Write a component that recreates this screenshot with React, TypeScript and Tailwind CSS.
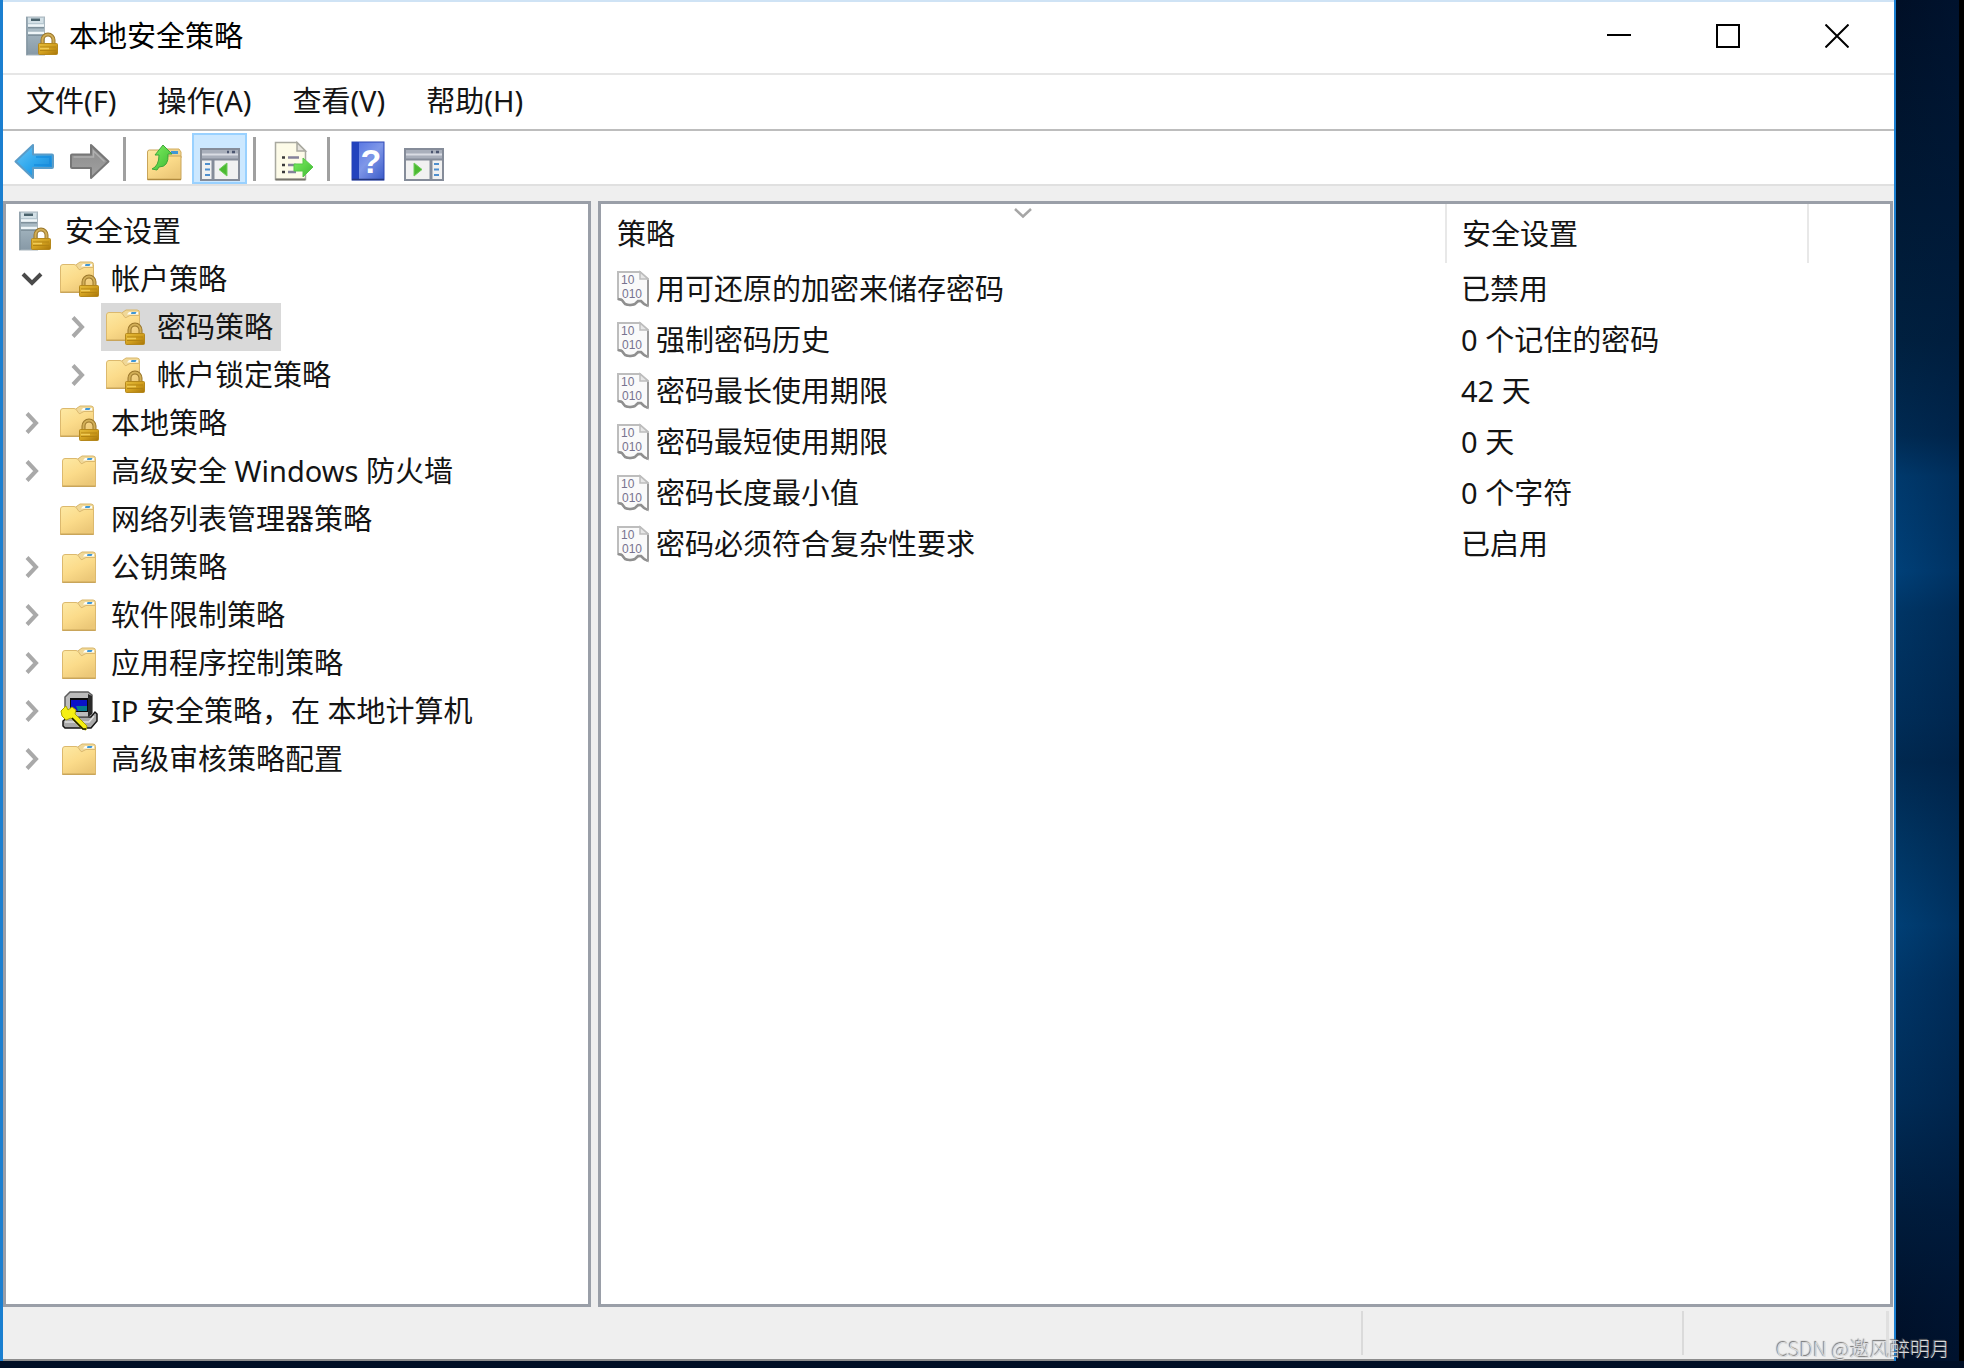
import type { ReactNode } from "react";

/* ---------- icons ---------- */

function Gradients() {
  return (
    <svg width="0" height="0" className="absolute" aria-hidden="true">
      <defs>
        <linearGradient id="gold" x1="0" y1="0" x2="1" y2="1">
          <stop offset="0" stopColor="#e6bd3c" />
          <stop offset="0.5" stopColor="#d2a01f" />
          <stop offset="1" stopColor="#a87508" />
        </linearGradient>
        <linearGradient id="server" x1="0" y1="0" x2="0" y2="1">
          <stop offset="0" stopColor="#c3d3db" />
          <stop offset="0.5" stopColor="#9dafba" />
          <stop offset="1" stopColor="#8799a6" />
        </linearGradient>
        <linearGradient id="paperYellow" x1="0" y1="0" x2="0.6" y2="1">
          <stop offset="0" stopColor="#fde9a4" />
          <stop offset="0.55" stopColor="#fbdb8a" />
          <stop offset="1" stopColor="#ecc878" />
        </linearGradient>
        <linearGradient id="blueArrow" x1="0" y1="0" x2="1" y2="1">
          <stop offset="0" stopColor="#6cc6f5" />
          <stop offset="0.5" stopColor="#2fa8ee" />
          <stop offset="1" stopColor="#1780cf" />
        </linearGradient>
        <linearGradient id="greyArrow" x1="0" y1="0" x2="0" y2="1">
          <stop offset="0" stopColor="#8a8a8a" />
          <stop offset="1" stopColor="#a2a2a2" />
        </linearGradient>
        <linearGradient id="help" x1="0" y1="0" x2="1" y2="1">
          <stop offset="0" stopColor="#4f6fe2" />
          <stop offset="0.5" stopColor="#7f97e8" />
          <stop offset="1" stopColor="#3a5ac8" />
        </linearGradient>
        <linearGradient id="green" x1="0" y1="0" x2="1" y2="1">
          <stop offset="0" stopColor="#7df060" />
          <stop offset="1" stopColor="#3fb833" />
        </linearGradient>
      </defs>
    </svg>
  );
}

function Icon({ children }: { children: ReactNode }) {
  return (
    <svg viewBox="0 0 40 40" className="size-10 shrink-0" aria-hidden="true">
      {children}
    </svg>
  );
}

function Lock({ x, y }: { x: number; y: number }) {
  return (
    <g transform={`translate(${x} ${y})`}>
      <path d="M4.500 11V7a5.500 5.500 0 0 1 11 0V11" fill="none" stroke="#9a762a" strokeWidth="4" />
      <path d="M4.500 11V7a5.500 5.500 0 0 1 11 0V11" fill="none" stroke="#d1ae57" strokeWidth="2" />
      <rect x="0.5" y="10.5" width="19" height="11" rx="1" fill="url(#gold)" stroke="#b5881c" />
      <path d="M2 14h16M2 17.500h16" stroke="#b38412" strokeWidth="1" />
      <path d="M2 15.500h9" stroke="#f0cb55" strokeWidth="1.500" />
    </g>
  );
}

function ServerIcon() {
  return (
    <Icon>
      <rect x="5.5" y="1" width="18" height="38" fill="url(#server)" stroke="#a9b6be" />
      <path d="M6 1v38" stroke="#7d8f9c" />
      <rect x="7" y="2" width="15" height="5" fill="#d3e0e6" />
      <rect x="10" y="2.5" width="9" height="2.5" fill="#4a626c" />
      <path d="M7 9.500h16M7 17h16" stroke="#eef5f8" strokeWidth="2.500" />
      <path d="M7 11.700h16M7 19.200h16" stroke="#7f919c" strokeWidth="1.500" />
      <Lock x={17} y={17} />
    </Icon>
  );
}

function FolderShape({ x }: { x: number }) {
  return (
    <g transform={`translate(${x} 4)`}>
      <path d="M15 4.500L20 1h11q2.500 0 2.500 2.500V10L17 11z" fill="#f0d898" stroke="#d9b76b" />
      <path d="M21 5.500l2-2.500h9v2.500z" fill="#fdfdf6" />
      <path d="M25.500 3h5l-1 2h-4.500z" fill="#3f97d6" />
      <path
        d="M0.500 31.500V6Q0.500 3.500 3 3.500h11q1.500 0 2.500 1.500l2.500 3.500q1 .5 2-.5l3-1.500H33.500V31.500z"
        fill="url(#paperYellow)"
        stroke="#dcb96e"
      />
      <path d="M0.500 31.300h33" stroke="#c9a55a" strokeWidth="1.500" />
    </g>
  );
}

function FolderIcon({ shift = 2 }: { shift?: number }) {
  return (
    <Icon>
      <FolderShape x={shift} />
    </Icon>
  );
}

function LockedFolderIcon() {
  return (
    <Icon>
      <g transform="translate(0 -2)">
        <FolderShape x={0} />
      </g>
      <Lock x={19} y={16} />
    </Icon>
  );
}

function IpSecurityIcon() {
  return (
    <Icon>
      <path d="M3 30l5-4h23l4-5 2 2v7l-6 7H5l-2-2z" fill="#a9a9a9" stroke="#151515" strokeWidth="1.500" />
      <path d="M5 31h24l5-6" fill="none" stroke="#e0e0e0" strokeWidth="1.500" />
      <path d="M5 6l5-5h18l4 3v18l-4 4H7l-2-3z" fill="#bcbcbc" stroke="#5c5c5c" strokeWidth="1.500" />
      <path d="M28 3l4 2v18l-4 3z" fill="#2a2a2a" />
      <path d="M10 7h18v14H10z" fill="#0b0b0b" />
      <path d="M11 9h16v11H11z" fill="#0a12c8" />
      <path d="M16 15h11v5h-9z" fill="#067a8c" />
      <path
        d="M1 20l5-5 2 4 4-3 4 3-1 4 12 12-1 4-4-1-11-11-5 2-4-4z"
        fill="#f6ef12"
        stroke="#a8a300"
        strokeWidth="1"
      />
      <path d="M12 27l11 11h3" fill="none" stroke="#1a1a00" strokeWidth="1.500" />
    </Icon>
  );
}

function BackIcon() {
  return (
    <Icon>
      <path d="M1.500 20.500L19 4v9.500h19q1 0 1 1V26q0 1-1 1H19v10z" fill="url(#blueArrow)" stroke="#5b9cc8" strokeWidth="2" strokeLinejoin="round" />
      <path d="M22 16h14v8H20" fill="none" stroke="#1288dc" strokeWidth="2" opacity=".6" />
    </Icon>
  );
}

function ForwardIcon() {
  return (
    <Icon>
      <path d="M38.500 20.500L21 4v9.500H2q-1 0-1 1V26q0 1 1 1h19v10z" fill="url(#greyArrow)" stroke="#777777" strokeWidth="2" strokeLinejoin="round" />
      <path d="M3.500 16H23.500V10L34.500 20.500" fill="none" stroke="#b0b0b0" strokeWidth="1.500" />
    </Icon>
  );
}

function FolderUpIcon() {
  return (
    <Icon>
      <path d="M20 13l3-5h12l2 3v6H20z" fill="#eed491" stroke="#d2ac5c" />
      <path d="M27 10h7v3h-7z" fill="#3f97d6" />
      <path d="M3.500 38.500V11q0-2 2-2H16l3 6h18v23.500z" fill="url(#paperYellow)" stroke="#c9a55a" />
      <path d="M3.500 38.500h33.500" stroke="#b08a3e" strokeWidth="1.500" />
      <path
        d="M8 28q7-3 7-14h-4L19 4l9 9h-4q1 13-9 13l-2 3z"
        fill="url(#green)"
        stroke="#3fa63a"
        strokeLinejoin="round"
      />
    </Icon>
  );
}

function PaneIcon({ side }: { side: "left" | "right" }) {
  const left = side === "left";
  return (
    <Icon>
      <rect x="1" y="8" width="38" height="31" fill="#f1f1f1" stroke="#858c99" strokeWidth="2" />
      <rect x="2" y="9" width="36" height="9" fill="#a9afbb" />
      <path d="M2 13.500h36" stroke="#d9dce3" strokeWidth="2" />
      <path d="M2 18.500h36" stroke="#858c99" strokeWidth="2" />
      <path d="M27 11h2M32 11h3" stroke="#4c5670" strokeWidth="2.500" />
      <path d={left ? "M13 19v19" : "M27 19v19"} stroke="#858c99" strokeWidth="3" />
      <path
        d={left ? "M5 23h5M5 28.500h5M5 34h5" : "M30 23h5M30 28.500h5M30 34h5"}
        stroke="#4f8fce"
        strokeWidth="2.200"
      />
      <path d={left ? "M27 22v13l-8-6.500z" : "M10 22v13l8-6.500z"} fill="#4cba32" stroke="#6fce5a" />
    </Icon>
  );
}

function ExportIcon() {
  return (
    <Icon>
      <path d="M1.500 1.500H23L31.500 10V38.500H1.500z" fill="#fdfbe8" stroke="#a9a9a0" strokeWidth="1.500" />
      <path d="M23 1.500V10h8.500z" fill="#e4e2dc" stroke="#a9a9a0" strokeWidth="1.500" />
      <path d="M1.500 38.500h30" stroke="#77756c" strokeWidth="2" />
      <path d="M8 16.500h3M8 24h3M8 31h3" stroke="#3a3a3a" strokeWidth="2.500" />
      <path d="M14 16.500h11M14 24h8M14 31h8" stroke="#85829a" strokeWidth="2.500" />
      <path d="M20 23h9v-6l10 9-10 10v-6h-9z" fill="url(#green)" stroke="#55c848" strokeLinejoin="round" />
    </Icon>
  );
}

function HelpIcon() {
  return (
    <Icon>
      <rect x="4" y="1" width="32" height="38" fill="url(#help)" stroke="#2c47b4" />
      <rect x="4" y="1" width="7" height="38" fill="#2343bd" />
      <path d="M4 38.500h32" stroke="#24377f" strokeWidth="1.500" />
      <text x="23" y="32" textAnchor="middle" fontSize="34" fontWeight="700" fontFamily="'Liberation Sans', sans-serif" fill="#ffffff">
        ?
      </text>
    </Icon>
  );
}

function PolicyIcon() {
  return (
    <svg viewBox="0 0 32 38" className="h-[38px] w-8 shrink-0" aria-hidden="true">
      <path
        d="M1 2H23L31 9V36L27 34L24 31Q20 31 18 34Q12 37 7 33L4 29L1 29z"
        fill="#fafafa"
        stroke="#bdbdbd"
        strokeWidth="2"
      />
      <path d="M1 29l4 1 3 4q5 2 10 0l3-3h3l3 3 4 2" fill="none" stroke="#8f8f8f" strokeWidth="2.500" />
      <path d="M31 10v26" stroke="#9a9a9a" strokeWidth="2" />
      <path d="M23 2v7h8z" fill="#e6e6e6" stroke="#bdbdbd" strokeWidth="1.500" />
      <g fontSize="12" fontFamily="'Liberation Sans', sans-serif" fill="#77738f">
        <text x="4" y="14">10</text>
        <text x="5" y="28">010</text>
      </g>
    </svg>
  );
}

function Chevron({ open }: { open?: boolean }) {
  return open ? (
    <svg viewBox="0 0 22 22" className="size-[22px]" fill="none" stroke="#4a4a4a" strokeWidth="4" aria-hidden="true">
      <path d="M2 6l9 9 9-9" />
    </svg>
  ) : (
    <svg viewBox="0 0 22 22" className="size-[22px]" fill="none" stroke="#a9a9a9" strokeWidth="4" aria-hidden="true">
      <path d="M6 1.500l9 9.500-9 9.500" />
    </svg>
  );
}

/* ---------- title bar, menu, toolbar ---------- */

function TitleBar() {
  return (
    <header className="flex h-[75px] shrink-0 items-center border-t-2 border-b-2 border-t-[#cfe3f5] border-b-[#e6e6e6] pb-1 pl-[18px]">
      <ServerIcon />
      <h1 className="ml-2 text-black">本地安全策略</h1>
      <div className="mr-[3px] ml-auto flex self-stretch">
        <button type="button" aria-label="最小化" className="flex w-[109px] items-center justify-center">
          <svg viewBox="0 0 24 24" className="size-6" stroke="#000" strokeWidth="2" aria-hidden="true">
            <path d="M0 11h24" />
          </svg>
        </button>
        <button type="button" aria-label="最大化" className="flex w-[109px] items-center justify-center">
          <svg viewBox="0 0 24 24" className="size-6" fill="none" stroke="#000" strokeWidth="2" aria-hidden="true">
            <path d="M1 1h22v22H1z" />
          </svg>
        </button>
        <button type="button" aria-label="关闭" className="flex w-[109px] items-center justify-center">
          <svg viewBox="0 0 24 24" className="size-6" stroke="#000" strokeWidth="2" aria-hidden="true">
            <path d="M0.500 0.500l23 23M23.500 0.500l-23 23" />
          </svg>
        </button>
      </div>
    </header>
  );
}

const menus = ["文件(F)", "操作(A)", "查看(V)", "帮助(H)"];

function MenuBar() {
  return (
    <nav className="flex h-14 shrink-0 items-center gap-[41px] border-b-2 border-[#bdbdbd] pb-0.5 pl-[23px]">
      {menus.map((m) => (
        <button key={m} type="button">
          {m}
        </button>
      ))}
    </nav>
  );
}

function ToolButton({ label, active, children }: { label: string; active?: boolean; children: ReactNode }) {
  return (
    <button
      type="button"
      aria-label={label}
      aria-pressed={active}
      className={
        active
          ? "flex h-[51px] w-[55px] items-end justify-center border-2 border-[#99d1ff] bg-[#cce8ff] pb-px"
          : "flex h-[51px] w-[55px] items-end justify-center border-2 border-transparent pb-px"
      }
    >
      {children}
    </button>
  );
}

function Separator() {
  return <span className="mr-[9px] mb-[3px] ml-[5px] h-11 w-[3px] bg-[#a0a0a0]" />;
}

function Toolbar() {
  return (
    <div className="flex h-[55px] shrink-0 items-end gap-px border-b-2 border-[#e0e0e0] pl-[3px]">
      <ToolButton label="后退">
        <BackIcon />
      </ToolButton>
      <ToolButton label="前进">
        <ForwardIcon />
      </ToolButton>
      <Separator />
      <ToolButton label="向上一级">
        <FolderUpIcon />
      </ToolButton>
      <ToolButton label="显示/隐藏控制台树" active>
        <PaneIcon side="left" />
      </ToolButton>
      <Separator />
      <ToolButton label="导出列表">
        <ExportIcon />
      </ToolButton>
      <Separator />
      <ToolButton label="帮助">
        <HelpIcon />
      </ToolButton>
      <ToolButton label="显示/隐藏操作窗格">
        <PaneIcon side="right" />
      </ToolButton>
    </div>
  );
}

/* ---------- console tree ---------- */

type TreeNode = {
  label: string;
  icon: ReactNode;
  state?: "open" | "closed";
  selected?: boolean;
  children?: TreeNode[];
};

const tree: TreeNode[] = [
  {
    label: "帐户策略",
    icon: <LockedFolderIcon />,
    state: "open",
    children: [
      { label: "密码策略", icon: <LockedFolderIcon />, state: "closed", selected: true },
      { label: "帐户锁定策略", icon: <LockedFolderIcon />, state: "closed" },
    ],
  },
  { label: "本地策略", icon: <LockedFolderIcon />, state: "closed" },
  { label: "高级安全 Windows 防火墙", icon: <FolderIcon />, state: "closed" },
  { label: "网络列表管理器策略", icon: <FolderIcon shift={0} /> },
  { label: "公钥策略", icon: <FolderIcon />, state: "closed" },
  { label: "软件限制策略", icon: <FolderIcon />, state: "closed" },
  { label: "应用程序控制策略", icon: <FolderIcon />, state: "closed" },
  { label: "IP 安全策略，在 本地计算机", icon: <IpSecurityIcon />, state: "closed" },
  { label: "高级审核策略配置", icon: <FolderIcon />, state: "closed" },
];

function TreeLabel({ node }: { node: TreeNode }) {
  return (
    <button
      type="button"
      className={
        node.selected
          ? "flex h-12 items-center gap-[11px] bg-[#d9d9d9] pr-2 pl-[5px] whitespace-nowrap"
          : "flex h-12 items-center gap-[11px] pr-2 pl-[5px] whitespace-nowrap"
      }
    >
      {node.icon}
      {node.label}
    </button>
  );
}

function TreeList({ nodes, nested }: { nodes: TreeNode[]; nested?: boolean }) {
  return (
    <ul className={nested ? "pl-[46px]" : ""}>
      {nodes.map((n) => (
        <li key={n.label}>
          <div className="flex">
            {n.state ? (
              <button
                type="button"
                aria-label={n.label + (n.state === "open" ? " 折叠" : " 展开")}
                className="flex w-[46px] shrink-0 items-center justify-center"
              >
                <Chevron open={n.state === "open"} />
              </button>
            ) : (
              <span className="w-[46px] shrink-0" />
            )}
            <TreeLabel node={n} />
          </div>
          {n.children && <TreeList nodes={n.children} nested />}
        </li>
      ))}
    </ul>
  );
}

function TreePane() {
  return (
    <aside className="w-[588px] shrink-0 overflow-hidden border-3 border-[#9a9fa8] bg-white pt-[3px] pl-[3px]">
      <TreeLabel node={{ label: "安全设置", icon: <ServerIcon /> }} />
      <TreeList nodes={tree} />
    </aside>
  );
}

/* ---------- policy list ---------- */

const policies = [
  ["用可还原的加密来储存密码", "已禁用"],
  ["强制密码历史", "0 个记住的密码"],
  ["密码最长使用期限", "42 天"],
  ["密码最短使用期限", "0 天"],
  ["密码长度最小值", "0 个字符"],
  ["密码必须符合复杂性要求", "已启用"],
];

function PolicyPane() {
  return (
    <main className="min-w-0 flex-1 border-3 border-[#9a9fa8] bg-white">
      <table className="w-full table-fixed border-collapse text-left">
        <colgroup>
          <col />
          <col className="w-[362px]" />
          <col className="w-[82px]" />
        </colgroup>
        <thead>
          <tr className="h-[59px]">
            <th scope="col" className="relative border-r-2 border-[#e8e8e8] pt-px pl-4 font-normal">
              <svg
                viewBox="0 0 20 12"
                className="absolute inset-x-0 top-[3px] mx-auto h-3 w-5"
                fill="none"
                stroke="#a6a6a6"
                strokeWidth="2.500"
                aria-hidden="true"
              >
                <path d="M2 2l8 7.500L18 2" />
              </svg>
              策略
            </th>
            <th scope="col" className="border-r-2 border-[#e8e8e8] pt-px pl-[15px] font-normal">
              安全设置
            </th>
            <td />
          </tr>
        </thead>
        <tbody>
          {policies.map(([name, value]) => (
            <tr key={name} className="h-[51px]">
              <td className="pl-4">
                <div className="flex items-center gap-[7px] whitespace-nowrap">
                  <PolicyIcon />
                  {name}
                </div>
              </td>
              <td className="pl-[15px] whitespace-nowrap">{value}</td>
              <td />
            </tr>
          ))}
        </tbody>
      </table>
    </main>
  );
}

function StatusBar() {
  return (
    <footer className="flex h-[54px] shrink-0 border-b-2 border-[#8c8c8c] py-1">
      <div className="flex-1 border-r-2 border-[#dadada]" />
      <div className="w-[321px] border-r-2 border-[#dadada]" />
      <div className="mr-[5px] w-[205px] border-r-3 border-[#e0e0e0]" />
    </footer>
  );
}

export default function App() {
  return (
    <div className="relative flex h-screen w-full flex-col overflow-hidden bg-[#000f26] font-['Noto_Sans','Noto_Sans_CJK_SC',sans-serif] text-[29px] leading-9 text-[#141414]">
      <Gradients />
      <div className="flex min-h-0 flex-1">
        <div className="flex min-w-0 flex-1 flex-col border-r-2 border-l-3 border-[#1b7fd0] bg-white">
          <TitleBar />
          <MenuBar />
          <Toolbar />
          <div className="flex min-h-0 flex-1 gap-[7px] bg-[#efefef] pt-[15px] pr-px">
            <TreePane />
            <PolicyPane />
          </div>
          <div className="bg-[#efefef]">
            <StatusBar />
          </div>
        </div>
        <div className="w-[63px] shrink-0 bg-[linear-gradient(to_right,transparent,rgba(0,25,60,0.35)),linear-gradient(to_bottom,#000f26_0%,#001833_14%,#00203f_25%,#002a52_32%,#00396c_35%,#004078_42%,#003565_45%,#002d58_53%,#00284f_56%,#003563_62%,#003f75_68%,#003668_72%,#002c57_81%,#001c3c_89%,#00122c_96%,#000f26_100%)]" />
        <div className="w-[5px] shrink-0 bg-black" />
      </div>
      <div className="h-[7px] shrink-0" />
      <p className="absolute right-[14px] bottom-[5px] font-['Noto_Sans_CJK_SC',sans-serif] text-xl leading-7 font-light text-[#d8dadd] [text-shadow:-1px_-1px_1px_#6b6b6b]">
        CSDN @邀风醉明月
      </p>
    </div>
  );
}
